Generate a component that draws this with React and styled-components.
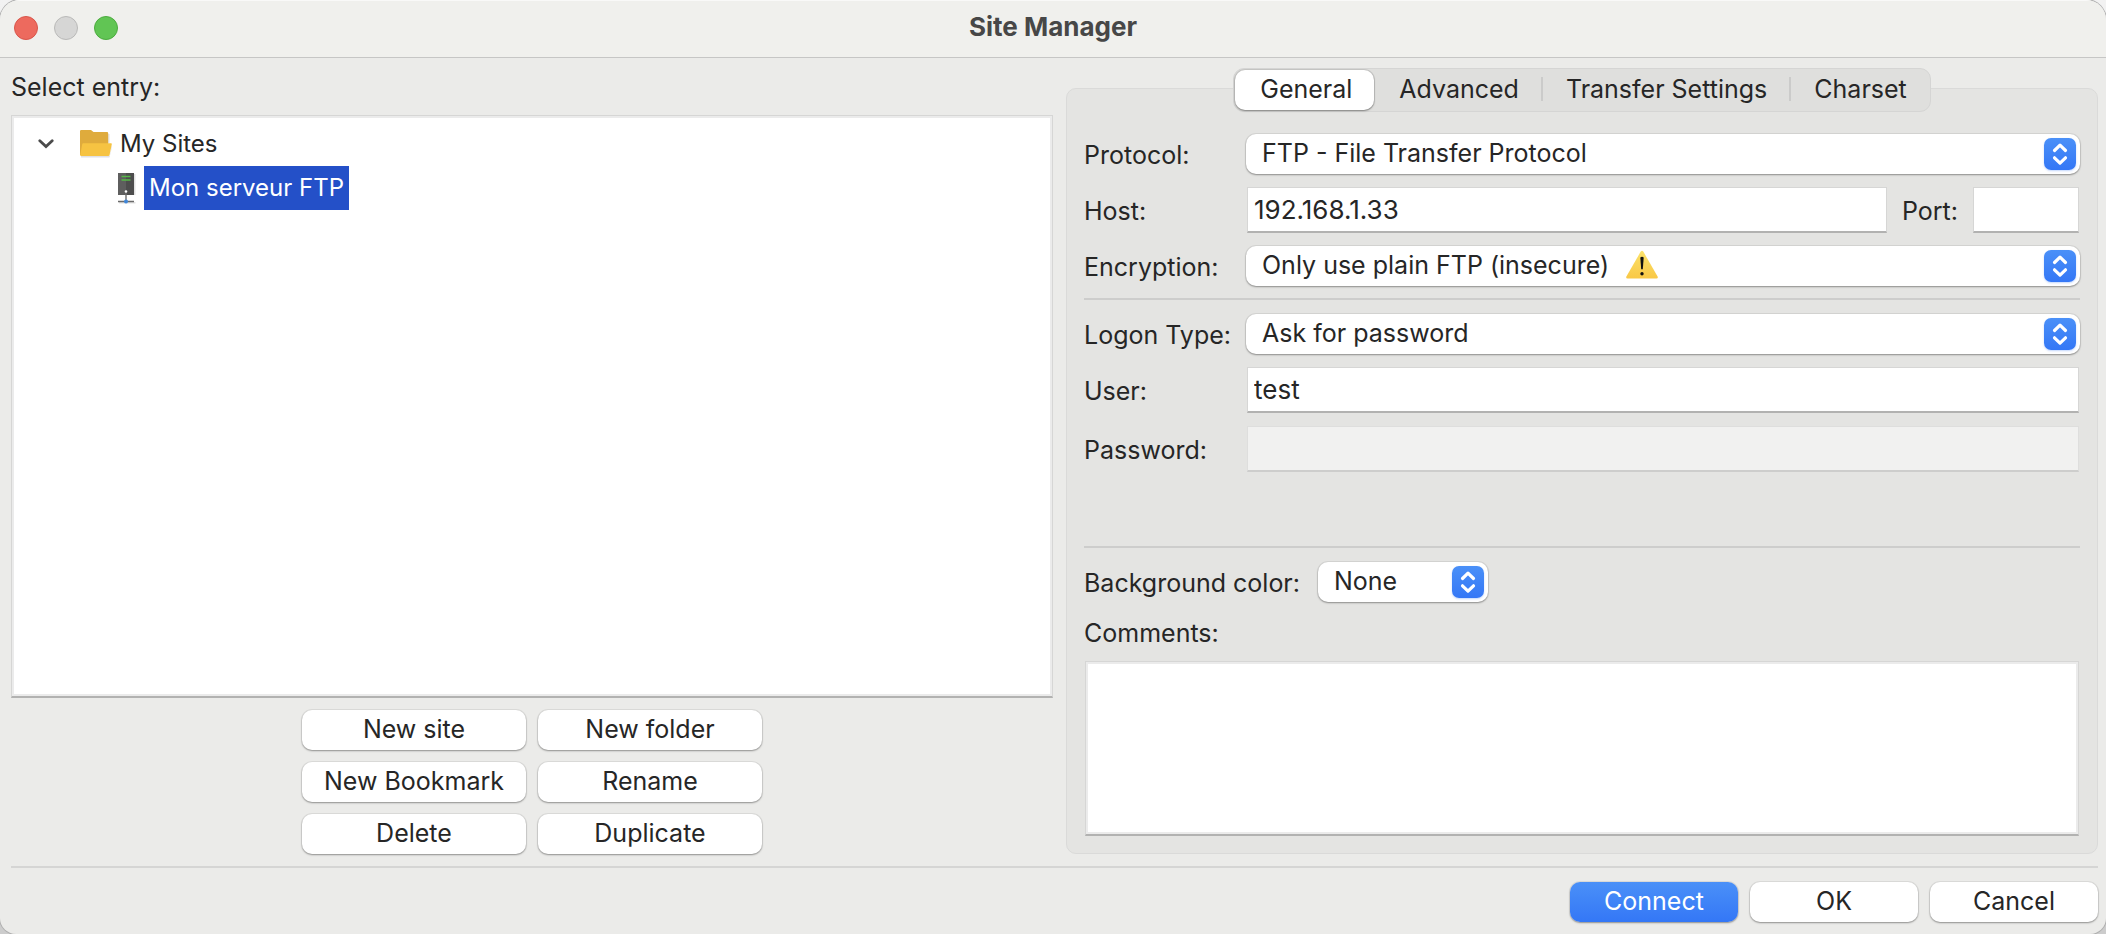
import React, { useState } from "react"
import styled, { createGlobalStyle, css } from "styled-components"

const App = () => {
  const [tab, setTab] = useState("General")

  return (
    <>
      <GlobalStyle />
      <Window>
        <TitleBar>
          <Lights>
            <Light type="button" aria-label="Close" $fill="#ed6a5e" $edge="#d8564b" />
            <Light type="button" aria-label="Minimize" disabled $fill="#d6d6d5" $edge="#b9b9b8" />
            <Light type="button" aria-label="Zoom" $fill="#61c554" $edge="#4cab3f" />
          </Lights>
          <Title>Site Manager</Title>
        </TitleBar>

        <Content>
          <Sites>
            <SitesLabel id="entries">Select entry:</SitesLabel>
            <Tree role="tree" aria-labelledby="entries">
              <TreeRow role="treeitem" aria-expanded="true">
                <Chevron />
                <FolderIcon />
                <TreeText>My Sites</TreeText>
              </TreeRow>
              <TreeRow role="treeitem" aria-selected="true" $child>
                <ServerIcon />
                <TreeText $selected>Mon serveur FTP</TreeText>
              </TreeRow>
            </Tree>
            <SiteActions>
              {siteActions.map(name => (
                <Button type="button" key={name}>
                  {name}
                </Button>
              ))}
            </SiteActions>
          </Sites>

          <Panel>
            <Tabs role="tablist">
              {tabs.map(name => (
                <Tab
                  type="button"
                  role="tab"
                  key={name}
                  aria-selected={tab === name}
                  onClick={() => setTab(name)}
                >
                  {name}
                </Tab>
              ))}
            </Tabs>

            <Fields>
              <Label htmlFor="protocol">Protocol:</Label>
              <PopUp id="protocol" options={["FTP - File Transfer Protocol"]} />

              <Label htmlFor="host">Host:</Label>
              <HostRow>
                <Input id="host" defaultValue="192.168.1.33" />
                <Label htmlFor="port">Port:</Label>
                <Input id="port" $narrow />
              </HostRow>

              <Label htmlFor="encryption">Encryption:</Label>
              <PopUp id="encryption" options={["Only use plain FTP (insecure)"]}>
                <WarningIcon />
              </PopUp>
            </Fields>

            <Divider />

            <Fields>
              <Label htmlFor="logon">Logon Type:</Label>
              <PopUp id="logon" options={["Ask for password"]} />

              <Label htmlFor="user">User:</Label>
              <Input id="user" defaultValue="test" />

              <Label htmlFor="password">Password:</Label>
              <Input id="password" type="password" disabled />
            </Fields>

            <Spacer />
            <Divider />

            <ColorRow>
              <Label htmlFor="color">Background color:</Label>
              <PopUp id="color" options={["None"]} narrow />
            </ColorRow>

            <CommentsLabel htmlFor="comments">Comments:</CommentsLabel>
            <Comments id="comments" />
          </Panel>
        </Content>

        <Footer>
          <Button type="button" $primary>
            Connect
          </Button>
          <Button type="button">OK</Button>
          <Button type="button">Cancel</Button>
        </Footer>
      </Window>
    </>
  )
}

export default App

const tabs = ["General", "Advanced", "Transfer Settings", "Charset"]

const siteActions = [
  "New site",
  "New folder",
  "New Bookmark",
  "Rename",
  "Delete",
  "Duplicate",
]

const PopUp = ({ id, options, narrow, children }) => (
  <SelectWrapper $narrow={narrow}>
    <Select id={id}>
      {options.map(option => (
        <option key={option}>{option}</option>
      ))}
    </Select>
    {children}
    <Arrows>
      <svg width="32" height="32" viewBox="0 0 32 32" aria-hidden="true">
        <path
          d="M10.5 12.5L16 7.2l5.5 5.3M10.5 19.8L16 25.1l5.5-5.3"
          fill="none"
          stroke="#fff"
          strokeWidth="3.2"
          strokeLinecap="round"
          strokeLinejoin="round"
        />
      </svg>
    </Arrows>
  </SelectWrapper>
)

const Chevron = () => (
  <Disclosure width="16" height="10" viewBox="0 0 16 10" aria-hidden="true">
    <path d="M1.8 1.8L8 7.6l6.2-5.8" fill="none" stroke="#4b4b4b" strokeWidth="2.8" strokeLinecap="round" />
  </Disclosure>
)

const FolderIcon = () => (
  <svg width="34" height="28" viewBox="0 0 34 28" aria-hidden="true">
    <path d="M28.200 4h1.300v9h-1.300zM1 26h28.500l2.500-11v2l-2.500 10.500H1z" fill="#e0e0e3" />
    <path d="M0 1.200Q0 0 1.200 0H11l2.500 2H27q1.200 0 1.200 1.200V25H0z" fill="#dfab3c" />
    <path d="M3.200 13.200H31q1 0 .8 1l-2.300 11Q29.300 26 28.300 26H1Q0 26 .2 25l2-10.800q.2-1 1-1z" fill="#f6c342" />
  </svg>
)

const ServerIcon = () => (
  <svg width="18" height="32" viewBox="0 0 18 32" aria-hidden="true">
    <path d="M16 2h1.500v21H2v-1.500h14zM1 30h16.500v1.500H1z" fill="#e2e2e2" />
    <path d="M0 1h16v22H0z" fill="#4d4d4d" />
    <path d="M0 1h8v22H0z" fill="#5e5e5e" />
    <path d="M3.500 4.500h9M3.500 8h9" stroke="#56b947" strokeWidth="1.600" />
    <path d="M8 20v8M0 29.500h16" stroke="#6a6a6a" strokeWidth="1.400" />
    <circle cx="8" cy="19.500" r="1.300" fill="#fff" />
    <circle cx="8" cy="29.500" r="2" fill="#3f86d8" />
  </svg>
)

const WarningIcon = () => (
  <Warning width="32" height="30" viewBox="0 0 32 30" aria-hidden="true">
    <defs>
      <linearGradient id="warn" x1="0" y1="0" x2="0" y2="1">
        <stop offset="0" stopColor="#fbe26a" />
        <stop offset="1" stopColor="#f9c846" />
      </linearGradient>
    </defs>
    <path d="M14.600 1.800q1.400-2 2.800 0L31.600 26.400q.8 2-1.200 2H1.600q-2 0-1.200-2z" fill="url(#warn)" />
    <path d="M14.300 7.500q1.700-1.600 3.400 0l-.9 11.700h-1.600z" fill="#111" />
    <circle cx="16" cy="23.700" r="1.700" fill="#111" />
  </Warning>
)

const GlobalStyle = createGlobalStyle`
  * {
    box-sizing: border-box;
  }

  body {
    margin: 0;
    background: linear-gradient(#f2f2f2, #cccccc);
    color: #262626;
    font: 25px/32px Inter, "Liberation Sans", sans-serif;
  }

  button,
  input,
  select,
  textarea {
    margin: 0;
    color: inherit;
    font: inherit;
  }
`

const Window = styled.main`
  display: flex;
  flex-direction: column;
  min-height: 100vh;
  overflow: hidden;
  border-radius: 20px 20px 16px 16px;
  background: #ebebe9;
  box-shadow: 0 0 0 1px #b0b0b0;
`

const TitleBar = styled.header`
  display: grid;
  grid-template-columns: 1fr auto 1fr;
  align-items: center;
  height: 58px;
  padding: 0 14px 1px;
  border-bottom: 1px solid #c6c6c5;
  background: #f0f0ed;
  box-shadow: inset 0 1px 0 #f9f9f8;
`

const Lights = styled.div`
  display: flex;
  gap: 16px;
`

const Light = styled.button`
  width: 24px;
  height: 24px;
  padding: 0;
  border: 1px solid ${({ $edge }) => $edge};
  border-radius: 50%;
  background: ${({ $fill }) => $fill};
`

const Title = styled.h1`
  margin: 0;
  padding-bottom: 2px;
  color: #474747;
  font-size: 26px;
  font-weight: 700;
`

const Content = styled.div`
  display: grid;
  flex: 1;
  grid-template-columns: 521fr 516fr;
  gap: 13px;
  padding: 10px 8px 12px 11px;
`

const Sites = styled.section`
  display: flex;
  flex-direction: column;
`

const SitesLabel = styled.div`
  padding: 3px 0 12px;
`

const well = css`
  border: 1px solid #d6d6d5;
  border-bottom: 2px solid #b2b2b1;
  background: #fff;
`

const Tree = styled.div`
  flex: 1;
  padding: 6px 0;
  font-size: 24px;
  ${well}
  box-shadow: inset 0 0 0 2px #ebebeb;
`

const TreeRow = styled.div`
  display: flex;
  align-items: center;
  gap: ${({ $child }) => ($child ? "8px" : "1px")};
  height: 44px;
  padding-left: ${({ $child }) => ($child ? "106px" : "26px")};
`

const Disclosure = styled.svg`
  margin-right: 25px;
`

const TreeText = styled.span`
  padding: 6px 5px;
  background: ${({ $selected }) => ($selected ? "#2450c8" : "none")};
  color: ${({ $selected }) => ($selected ? "#fff" : "inherit")};
`

const SiteActions = styled.div`
  display: grid;
  grid-template-columns: repeat(2, 224px);
  justify-content: center;
  gap: 12px;
  padding-top: 12px;
`

const Button = styled.button`
  height: 40px;
  padding: 0 0 2px;
  border: 0;
  border-radius: 10px;
  background: ${({ $primary }) =>
    $primary ? "linear-gradient(#4a90f8, #3477f6)" : "#fff"};
  box-shadow: 0 0 0 1px rgba(0, 0, 0, 0.06), 0 1px 2px rgba(0, 0, 0, 0.35);
  color: ${({ $primary }) => ($primary ? "#fff" : "inherit")};
`

const Panel = styled.section`
  display: flex;
  flex-direction: column;
  margin-top: 20px;
  padding: 0 17px 17px;
  border: 1px solid #dadad9;
  border-radius: 10px;
  background: #e4e4e2;
`

// sits across the top edge of the panel
const Tabs = styled.div`
  display: flex;
  align-self: center;
  margin: -21px 0 22px;
  padding: 1px;
  border: 1px solid #d5d5d4;
  border-radius: 11px;
  background: #dfdfdd;
`

const Tab = styled.button`
  display: flex;
  align-items: center;
  height: 40px;
  padding: 0 0 2px;
  border: 0;
  border-radius: 10px;
  background: none;

  &::before {
    width: 2px;
    height: 24px;
    margin-right: 23px;
    background: transparent;
    content: "";
  }

  &::after {
    width: 22px;
    content: "";
  }

  & + &::before {
    background: #cbcbca;
  }

  &[aria-selected="true"] {
    background: #fff;
    box-shadow: 0 0 0 1px rgba(0, 0, 0, 0.1), 0 1px 2px rgba(0, 0, 0, 0.35);
  }

  &[aria-selected="true"]::before,
  &[aria-selected="true"] + &::before {
    background: transparent;
  }
`

const Fields = styled.div`
  display: grid;
  grid-template-columns: 150px 1fr;
  align-items: center;
  gap: 13px 12px;
`

const Label = styled.label`
  padding-top: 2px;
  white-space: nowrap;
`

const HostRow = styled.div`
  display: flex;
  align-items: center;
  gap: 14px;
`

const Input = styled.input`
  flex: ${({ $narrow }) => ($narrow ? "0 0 106px" : "1")};
  min-width: 0;
  height: 46px;
  margin: 0 1px;
  padding: 0 6px;
  border-radius: 0;
  font-size: 26px;
  ${well}

  &:disabled {
    border-color: #dededd;
    border-bottom-color: #cdcdcc;
    background: #f1f1f0;
  }
`

const SelectWrapper = styled.div`
  position: relative;
  width: ${({ $narrow }) => ($narrow ? "170px" : "auto")};
`

const Select = styled.select`
  display: block;
  width: 100%;
  height: 40px;
  padding: 0 48px 2px 16px;
  border: 0;
  border-radius: 10px;
  appearance: none;
  background: #fff;
  box-shadow: 0 0 0 1px rgba(0, 0, 0, 0.06), 0 1px 2px rgba(0, 0, 0, 0.35);
`

const Arrows = styled.span`
  position: absolute;
  top: 4px;
  right: 4px;
  display: flex;
  border-radius: 7px;
  background: linear-gradient(#4a90f8, #3477f6);
  box-shadow: 0 1px 2px rgba(52, 119, 246, 0.3);
  pointer-events: none;
`

const Warning = styled.svg`
  position: absolute;
  top: 4px;
  left: 380px;
  pointer-events: none;
`

const Divider = styled.hr`
  width: 100%;
  height: 2px;
  margin: 12px 0 14px;
  border: 0;
  background: #cdcdcc;
`

const Spacer = styled.div`
  height: 62px;
`

const ColorRow = styled.div`
  display: flex;
  align-items: center;
  gap: 18px;
`

const CommentsLabel = styled(Label)`
  padding: 15px 0 12px;
`

const Comments = styled.textarea`
  flex: 1;
  min-height: 80px;
  margin: 0 1px;
  padding: 6px;
  border-radius: 0;
  resize: none;
  ${well}
  box-shadow: inset 0 0 0 2px #ebebeb;
`

const Footer = styled.footer`
  display: grid;
  grid-template-columns: repeat(3, 168px);
  justify-content: end;
  gap: 12px;
  margin: 0 8px 0 11px;
  padding: 14px 0 12px;
  border-top: 2px solid #d5d5d4;
`
